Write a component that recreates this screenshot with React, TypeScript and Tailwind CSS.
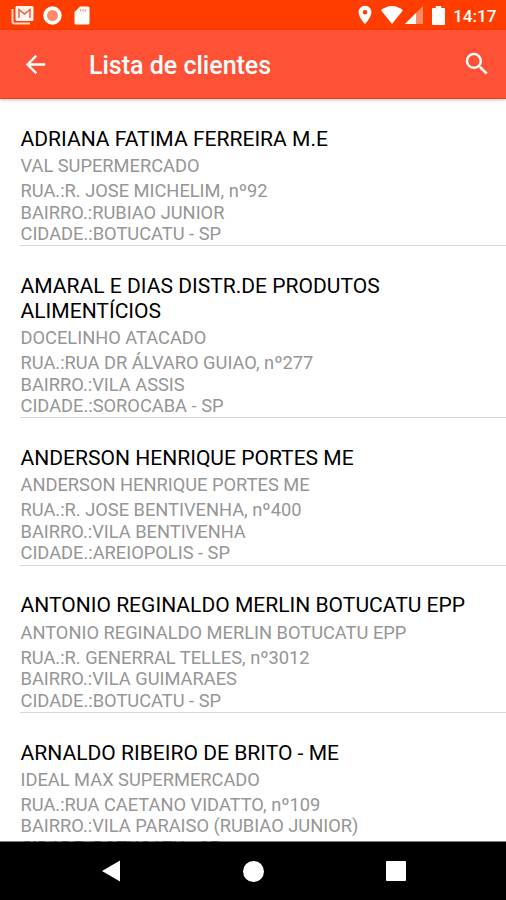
import { MdArrowBack, MdLocationOn, MdSearch } from "react-icons/md";

type Client = {
  name: string;
  alias: string;
  street: string;
  district: string;
  city: string;
};

const clients: Client[] = [
  {
    name: "ADRIANA FATIMA FERREIRA M.E",
    alias: "VAL SUPERMERCADO",
    street: "R. JOSE MICHELIM, nº92",
    district: "RUBIAO JUNIOR",
    city: "BOTUCATU - SP",
  },
  {
    name: "AMARAL E DIAS DISTR.DE PRODUTOS ALIMENTÍCIOS",
    alias: "DOCELINHO ATACADO",
    street: "RUA DR ÁLVARO GUIAO, nº277",
    district: "VILA ASSIS",
    city: "SOROCABA - SP",
  },
  {
    name: "ANDERSON HENRIQUE PORTES ME",
    alias: "ANDERSON HENRIQUE PORTES ME",
    street: "R. JOSE BENTIVENHA, nº400",
    district: "VILA BENTIVENHA",
    city: "AREIOPOLIS - SP",
  },
  {
    name: "ANTONIO REGINALDO MERLIN BOTUCATU EPP",
    alias: "ANTONIO REGINALDO MERLIN BOTUCATU EPP",
    street: "R. GENERRAL TELLES, nº3012",
    district: "VILA GUIMARAES",
    city: "BOTUCATU - SP",
  },
  {
    name: "ARNALDO RIBEIRO DE BRITO - ME",
    alias: "IDEAL MAX SUPERMERCADO",
    street: "RUA CAETANO VIDATTO, nº109",
    district: "VILA PARAISO (RUBIAO JUNIOR)",
    city: "BOTUCATU - SP",
  },
];

function StatusBar() {
  return (
    <div className="flex h-[29.5px] shrink-0 items-center bg-[#ff3d00] pl-[11px] pr-[9.5px] text-white">
      <svg className="mt-px" width="23" height="20" viewBox="0 0 23 20" fill="none">
        <path d="M1.500 4v12.500a2 2 0 0 0 2 2H19" stroke="#ffd9ce" strokeWidth="2" />
        <rect x="4.500" y="1" width="18" height="15" rx="1.500" fill="#fff4f0" />
        <path d="M8 13V4.500l5.500 4.500L19 4.500V13" stroke="#f0583c" strokeWidth="1.400" />
      </svg>
      <svg className="ml-[9px] mt-px" width="19" height="19" viewBox="0 0 19 19">
        <circle cx="9.500" cy="9.500" r="9.200" fill="#fff" />
        <circle cx="9.500" cy="9.500" r="5.500" fill="#ff8a66" />
      </svg>
      <svg className="ml-[12px] mt-px" width="16" height="19" viewBox="0 0 16 19">
        <path d="M6 .5h8A1.500 1.500 0 0 1 15.500 2v15a1.500 1.500 0 0 1-1.500 1.500H2A1.500 1.500 0 0 1 .5 17V6z" fill="#fff" />
        <path d="M6.500 3v2.500M9 3v2.500M11.500 3v2.500" stroke="#ff9a7a" strokeWidth="1.300" />
      </svg>
      <div className="ml-auto flex items-center">
        <MdLocationOn className="mt-px size-[22px]" />
        <svg className="ml-[5px] mt-px" width="22" height="18" viewBox="0 0 22 18">
          <path d="M11 18 0 4.300C3 1.700 6.800 0 11 0s8 1.700 11 4.300z" fill="#fff" />
        </svg>
        <svg className="ml-[2px] mt-px" width="18" height="18" viewBox="0 0 18 18">
          <path d="M0 18 18 0v18z" fill="#ff8b66" />
          <path d="M0 18 11 7v11z" fill="#fff" />
        </svg>
        <svg className="ml-[9px] mt-px" width="13" height="19" viewBox="0 0 12 19" preserveAspectRatio="none">
          <path d="M3.500 0h5v2H11a1 1 0 0 1 1 1v15a1 1 0 0 1-1 1H1a1 1 0 0 1-1-1V3a1 1 0 0 1 1-1h2.500z" fill="#fff" />
        </svg>
        <span className="ml-[8px] mt-[2px] text-[17.200px] font-medium leading-5">14:17</span>
      </div>
    </div>
  );
}

function AppBar() {
  return (
    <header className="z-10 flex h-[69.5px] shrink-0 items-center border-b border-[#e9401f] bg-[#ff5135] pl-[20.5px] pr-[14px] text-white shadow-[0_1px_3px_rgba(0,0,0,0.250)]">
      <MdArrowBack className="mt-px size-[29px]" />
      <h1 className="ml-[39.5px] mt-[5px] text-[25px] font-medium leading-8">Lista de clientes</h1>
      <MdSearch className="ml-auto size-[30px]" />
    </header>
  );
}

function ClientItem({ client }: { client: Client }) {
  return (
    <li className="ml-[20px] border-b border-[#d8d8d8] pb-[0.800px] pl-[0.500px] pt-[27.800px] text-[18.270px] leading-[21.500px] text-[#969696]">
      <h2 className="max-w-[465px] text-[21.050px] leading-[24.700px] text-black">{client.name}</h2>
      <p className="mt-[3.500px]">{client.alias}</p>
      <p className="mt-[3.500px]">RUA.:{client.street}</p>
      <p>BAIRRO.:{client.district}</p>
      <p>CIDADE.:{client.city}</p>
    </li>
  );
}

function NavBar() {
  return (
    <nav className="z-10 -mt-px flex h-[59px] shrink-0 items-center justify-between border-t border-black/50 bg-black bg-clip-padding px-[101px]">
      <svg width="20" height="22" viewBox="0 0 20 22" fill="#fff">
        <path d="M19 .5v21L1 11z" />
      </svg>
      <div className="size-[21px] rounded-full bg-white" />
      <div className="mr-[-1px] size-[20px] rounded-[1px] bg-white" />
    </nav>
  );
}

export default function App() {
  return (
    <main className="flex h-screen flex-col overflow-hidden bg-white font-[Roboto,sans-serif]">
      <StatusBar />
      <AppBar />
      <ul className="min-h-0 flex-1 overflow-hidden">
        {clients.map((client) => (
          <ClientItem key={client.name} client={client} />
        ))}
      </ul>
      <NavBar />
    </main>
  );
}
